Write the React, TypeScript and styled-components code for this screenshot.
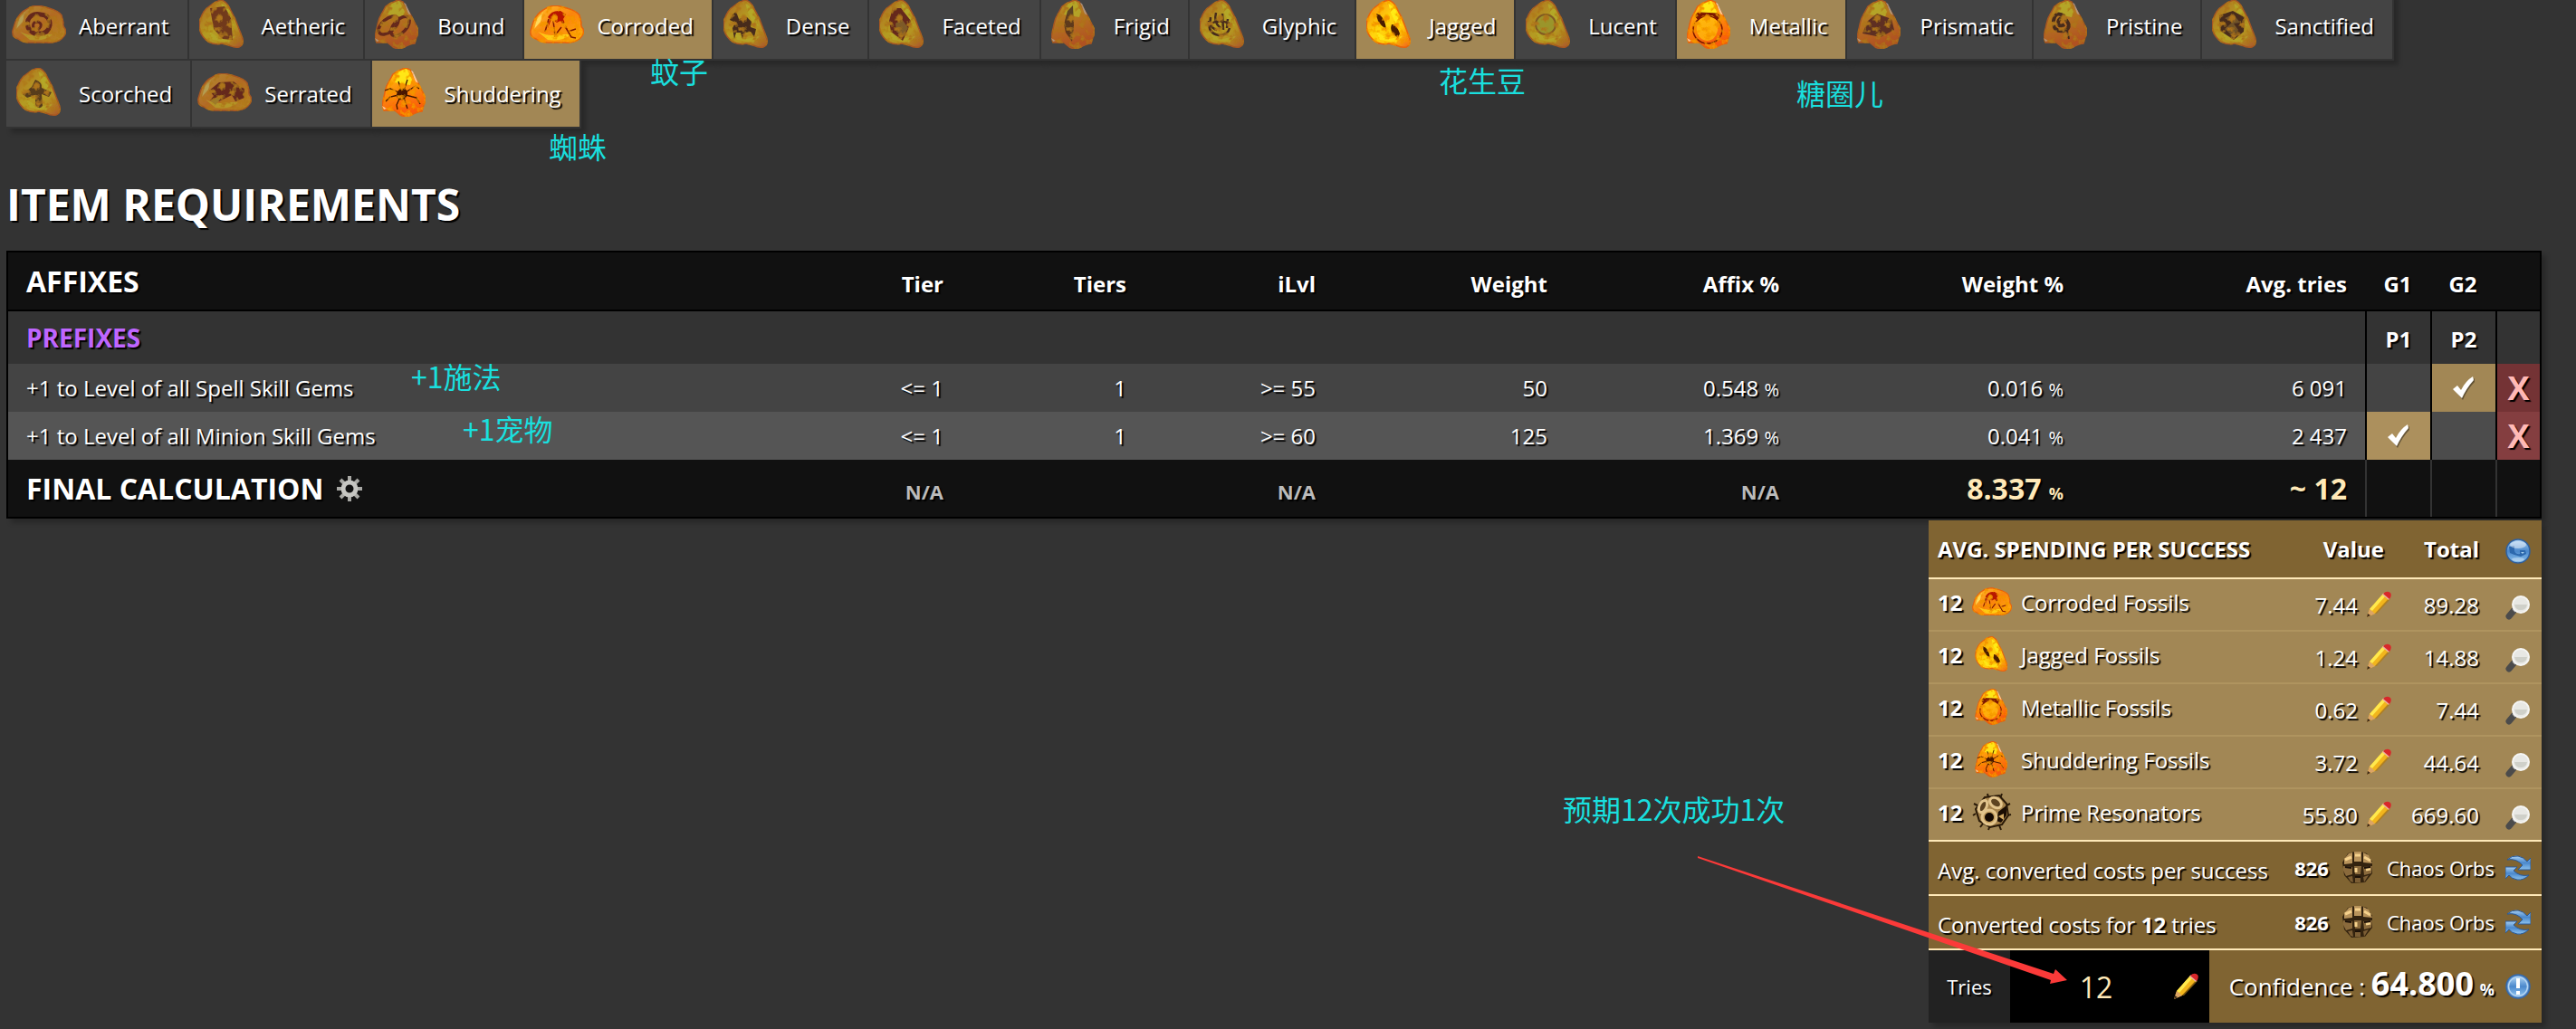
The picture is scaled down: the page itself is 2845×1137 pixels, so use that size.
import React, { useState } from "react";
import styled, { createGlobalStyle, css } from "styled-components";

const color = {
  page: "#333333",
  tile: "#444444",
  rowAlt: "#555555",
  head: "#111111",
  gold: "#a28755",
  goldLight: "#ac905d",
  goldDark: "#806432",
  cream: "#ffe9b8",
  note: "#1adfde",
};

const shadow = "5px 5px 5px rgba(0, 0, 0, 0.22)";

const GlobalStyle = createGlobalStyle`
  *, *::before, *::after { box-sizing: border-box; }
  body {
    margin: 0;
    background: ${color.page};
    color: #fff;
    font: 24px/33px "Open Sans", "Noto Sans CJK SC", sans-serif;
    text-shadow: 2px 2px 1px #000;
    overflow-x: hidden;
  }
  button, input { font: inherit; color: inherit; text-shadow: inherit; }
  strong { font-weight: 700; }
  svg { display: block; flex: none; }
`;

const Page = styled.main`
  position: relative;
  display: flow-root;
  padding: 0 38px 7px 7px;
`;

const FossilList = styled.div`
  display: flex;
  flex-wrap: wrap;
  margin-top: -8px;
`;

const FossilTile = styled.button<{ $on: boolean }>`
  display: flex;
  align-items: center;
  gap: 10px;
  height: 75px;
  padding: 0 20px 0 6px;
  border: 0 solid ${color.page};
  border-width: 0 2px 2px 0;
  background: ${(p) => (p.$on ? color.gold : color.tile)};
  box-shadow: ${shadow};
  cursor: pointer;
  svg { opacity: ${(p) => (p.$on ? 1 : 0.6)}; }
`;

const Heading = styled.h1`
  margin: 51px 0 19px;
  font-size: 48px;
  line-height: 65px;
  font-weight: 700;
`;

const AffixTable = styled.table`
  width: 100%;
  table-layout: fixed;
  border-collapse: separate;
  border-spacing: 0;
  border: 2px solid #000;
  box-shadow: ${shadow};
`;

const Col = styled.col<{ $w?: number }>`
  width: ${(p) => (p.$w ? `${p.$w}px` : "auto")};
`;

const cellBase = css`
  padding: 10px 20px;
  text-align: right;
  vertical-align: baseline;
  white-space: nowrap;
  &:first-child { text-align: left; }
`;

const Cell = styled.td`${cellBase}`;
const HeadCell = styled.th`
  ${cellBase}
  font-weight: 700;
`;

const SlotHead = styled(HeadCell)`
  padding: 10px 0;
  text-align: center;
`;

const SlotCell = styled.td<{ $kind?: "on" | "shade" | "remove" }>`
  padding: 0;
  border-left: 2px solid #000;
  background: ${(p) =>
    p.$kind === "on" ? color.gold
    : p.$kind === "remove" ? "#743335"
    : p.$kind === "shade" ? "rgba(0, 0, 0, 0.1)"
    : "transparent"};
`;

const HeaderRow = styled.tr`
  background: ${color.head};
  th { border-bottom: 2px solid #000; }
`;

const GroupRow = styled.tr`
  background: ${color.page};
  th + th { border-left: 2px solid #000; }
`;

const AffixRow = styled.tr<{ $alt: boolean }>`
  background: ${(p) => (p.$alt ? color.rowAlt : color.tile)};
  ${(p) =>
    p.$alt &&
    css`
      ${SlotCell}:last-child { background: #843e40; }
      ${SlotCell}:has(input:checked) { background: ${color.goldLight}; }
    `}
`;

const FinalRow = styled.tr`
  background: ${color.head};
  td:nth-last-child(-n + 3) { border-left: 2px solid ${color.page}; }
`;

const Title = styled.span<{ $small?: boolean }>`
  font-size: ${(p) => (p.$small ? 28 : 32)}px;
  line-height: ${(p) => (p.$small ? 38 : 43)}px;
  color: ${(p) => (p.$small ? "#bf66ff" : "#fff")};
`;

const FinalTitle = styled.span`
  display: flex;
  align-items: center;
  gap: 14px;
`;

const Small = styled.span`
  font-size: 20px;
  line-height: 20px;
`;

const Muted = styled.span`
  font-size: 22px;
  line-height: 22px;
  font-weight: 700;
  color: #bbb;
`;

const Result = styled.strong`
  font-size: 32px;
  line-height: 43px;
  color: ${color.cream};
  ${Small} { font-size: 18px; }
`;

const CheckLabel = styled.label`
  display: flex;
  align-items: center;
  justify-content: center;
  height: 53px;
  cursor: pointer;
  input { position: absolute; opacity: 0; margin: 0; }
`;

const RemoveButton = styled.button`
  display: block;
  width: 100%;
  height: 53px;
  padding: 0;
  border: 0;
  background: none;
  color: #ffb9b6;
  font-size: 36px;
  font-weight: 700;
  cursor: pointer;
`;

const IconButton = styled.button`
  display: inline-block;
  padding: 0;
  border: 0;
  background: none;
  vertical-align: middle;
  cursor: pointer;
`;

const Panel = styled.section`
  width: 677px;
  margin: 2px 0 0 auto;
  background: ${color.goldDark};
  box-shadow: ${shadow};
`;

const SpendTable = styled.table`
  width: 100%;
  table-layout: fixed;
  border-collapse: separate;
  border-spacing: 0;
  th, td {
    padding: 0;
    text-align: right;
    white-space: nowrap;
    border-bottom: 2px solid #af945f;
  }
  th:first-child, td:first-child {
    padding-left: 10px;
    text-align: left;
  }
  th:last-child, td:last-child { padding-right: 12px; }
  th:nth-child(2) { padding-right: 8px; }
  th { height: 65px; }
  td {
    height: 58px;
    background: ${color.gold};
  }
  th, tr:last-child td { border-bottom-color: ${color.cream}; }
`;

const ItemName = styled.div`
  display: flex;
  align-items: center;
  height: 50px;
  margin-bottom: 6px;
  strong { width: 28px; }
  svg { margin: 0 10px; }
`;

const ValueWithEdit = styled.div`
  display: flex;
  align-items: center;
  justify-content: flex-end;
  gap: 9px;
`;

const CostRow = styled.div`
  display: flex;
  align-items: center;
  height: 60px;
  padding: 0 12px 0 10px;
  border-bottom: 2px solid ${color.cream};
  > span:first-child { margin: 4px auto 0 0; }
`;

const CostAmount = styled.span`
  display: flex;
  align-items: center;
  gap: 12px;
  margin-right: 12px;
  font-size: 22px;
`;

const TriesRow = styled.div`
  display: flex;
  align-items: stretch;
  height: 80px;
`;

const TriesLabel = styled.label`
  display: flex;
  align-items: center;
  justify-content: center;
  width: 90px;
  background: #222;
  font-size: 22px;
`;

const TriesBox = styled.div`
  display: flex;
  align-items: center;
  width: 220px;
  padding: 0 12px 0 10px;
  background: #000;
  input {
    flex: 1;
    min-width: 0;
    height: 100%;
    padding: 0;
    border: 0;
    outline: 0;
    background: none;
    color: ${color.cream};
    font-size: 32px;
    text-align: center;
    text-shadow: none;
  }
`;

const Confidence = styled.div`
  display: flex;
  align-items: center;
  justify-content: flex-end;
  flex: 1;
  gap: 12px;
  padding-right: 12px;
  p { margin: 0; font-size: 26px; line-height: 49px; white-space: nowrap; }
  strong { font-size: 36px; }
  small { font-size: 18px; font-weight: 700; }
`;

const Note = styled.span<{ $x: number; $y: number }>`
  position: absolute;
  left: ${(p) => p.$x}px;
  top: ${(p) => p.$y}px;
  color: ${color.note};
  font: 32px/40px "Noto Sans CJK SC", sans-serif;
  text-shadow: none;
  white-space: nowrap;
  pointer-events: none;
`;

const ArrowDrawing = styled.svg`
  position: absolute;
  left: 1875px;
  top: 946px;
  pointer-events: none;
`;

const SharedDefs = styled.svg`
  position: absolute;
  width: 0;
  height: 0;
`;

/* ---------- drawings ---------- */

type Shape = "round" | "lean" | "tall";

const outlines: Record<Shape, string> = {
  round:
    "M30 7 L41 10 Q52 13 55 18 L57 26 Q56 30 59 33 Q61 39 55 44 Q48 49 39 48 L20 48 Q12 48 7 44 Q0 42 1 35 L4 25 Q9 15 15 12 Q22 7 30 7Z",
  lean:
    "M30 1 Q36 4 38 9 Q45 21 49 33 L53 44 Q54 51 49 53 Q44 54 38 51 L30 49 Q22 51 15 47 Q8 42 6 35 Q4 27 7 20 Q10 12 16 8 Q23 2 30 1Z",
  tall:
    "M31 1 L36 3 L40 10 L45 18 L52 32 Q54 37 51 42 L49 49 Q42 50 38 53 Q30 56 25 53 L19 48 L7 48 L5 42 L7 33 Q8 27 10 21 L17 8 Q24 3 31 1Z",
};

const D = "#4a1c04";
const R = "#7c1602";

const marks: Record<string, React.ReactNode> = {
  Aberrant: (
    <g fill="none" stroke={R} strokeWidth="5" strokeLinecap="round">
      <path d="M25 38 Q15 33 18 23 Q22 15 32 17 Q43 18 42 29 Q40 39 29 38" />
      <path d="M24 32 Q22 25 29 25 Q35 28 30 33" strokeWidth="3" />
    </g>
  ),
  Aetheric: <path d="M17 10 L33 8 L40 21 L42 45 L31 44 L21 33Z" fill={R} opacity=".85" />,
  Bound: (
    <g fill="none" stroke={R} strokeWidth="3.5">
      <ellipse cx="20" cy="29" rx="13" ry="7" transform="rotate(-40 20 29)" />
      <ellipse cx="33" cy="30" rx="13" ry="7" transform="rotate(-48 33 30)" />
    </g>
  ),
  Corroded: (
    <g>
      <path d="M20 20 Q24 12 34 13 L40 17 L37 22 L42 34 L34 24 L30 26 L24 22 L20 32 L22 22Z" fill="#b81500" />
      <path d="M21 22 L17 36 M26 24 L28 40 L35 31 M36 25 L46 42 L51 43 M42 36 L51 33" fill="none" stroke={R} strokeWidth="1.5" />
    </g>
  ),
  Dense: (
    <path d="M12 23 L15 17 L19 14 L22 22 L31 20 L36 25 L35 31 L41 33 L39 42 L35 36 L29 37 L26 44 L24 37 L19 37 L17 44 L15 32 L18 26Z" fill={D} />
  ),
  Faceted: (
    <g>
      <path d="M20 10 L29 10 L40 24 L37 33 L31 46 L18 36 L16 24Z" fill={R} />
      <path d="M23 27 L30 22 L37 32 L31 42 L24 36Z" fill="#a46a16" />
    </g>
  ),
  Frigid: <path d="M29 7 L30 30 L28 47 L21 37 L19 28 L23 13Z" fill={D} opacity=".8" />,
  Glyphic: (
    <g fill="none" stroke={D} strokeWidth="2.5">
      <path d="M15 24 Q14 38 26 40 Q36 40 38 32 M17 20 Q15 32 24 34 M23 15 Q20 26 28 32 M30 16 L31 34 M36 22 L35 32 M17 27 Q27 22 38 27" />
    </g>
  ),
  Jagged: (
    <g fill={D}>
      <path d="M16 16 Q25 18 27 33 Q17 28 16 16Z" />
      <path d="M33 28 Q38 27 42 38 L40 43 L34 38 Q31 33 33 28Z" />
    </g>
  ),
  Lucent: <circle cx="27" cy="28" r="11" fill="#d4cc1c" stroke="#ac6a0c" strokeWidth="2" />,
  Metallic: (
    <g fill="none" stroke={R}>
      <path d="M18 23 L15 20 Q14 15 20 15 L38 16 Q42 17 41 21 L38 23 L34 18 L22 18Z" fill={R} strokeWidth="1" />
      <ellipse cx="28" cy="34" rx="16" ry="15" strokeWidth="1.5" />
      <path d="M18 24 Q27 14 38 24 Q42 36 34 44 Q26 49 19 42 Q13 34 18 24Z" fill="#ffc40a" stroke="none" opacity=".7" />
    </g>
  ),
  Prismatic: <path d="M27 16 L43 22 L46 34 L31 42 L11 38 L17 24Z" fill="#70200a" />,
  Pristine: (
    <g fill="none" stroke={D} strokeWidth="4">
      <path d="M28 19 Q18 12 16 24 Q15 37 28 35 Q37 31 29 22 Q22 19 21 26 Q22 32 28 28" />
      <path d="M31 34 L33 44" strokeWidth="2" />
    </g>
  ),
  Sanctified: (
    <g>
      <path d="M13 18 L28 13 L41 20 L40 36 L29 45 L14 35Z" fill={D} />
      <path d="M19 21 L29 17 L36 26 L29 27 L34 34 L28 41 L19 33 L27 26Z" fill="#8d5b14" />
    </g>
  ),
  Scorched: (
    <path d="M26 14 Q34 17 33 23 L44 28 L41 33 L33 30 L34 43 Q30 48 26 42 L26 31 L17 34 L12 30 L22 22Z" fill={D} opacity=".85" />
  ),
  Serrated: (
    <g>
      <path d="M13 26 L24 17 L40 16 L46 21 L52 24 L52 34 L42 38 L38 31 L24 38 L14 37 L18 32Z" fill={R} />
      <path d="M24 32 L29 31 L20 42 L14 37Z" fill="#d89e18" />
    </g>
  ),
  Shuddering: (
    <g stroke="#3d1400" strokeWidth="1.3" fill="none">
      <path d="M27 28 L23 16 M29 26 L33 14 M31 28 L42 21 L46 24 M31 31 L43 34 L47 41 M23 28 L14 24 L8 26 M23 31 L14 33 L9 38 M25 33 L21 42 L22 47 M29 34 L33 46" />
      <ellipse cx="27" cy="30" rx="5" ry="6" fill="#4a1700" transform="rotate(35 27 30)" />
    </g>
  ),
};

function FossilIcon({ name, shape, width = 64, height = 60 }: { name: string; shape: Shape; width?: number; height?: number }) {
  return (
    <svg width={width} height={height} viewBox={width === 64 ? "0 0 64 60" : "0 0 60 56"} aria-hidden="true">
      <g filter="url(#amber)">
        <path d={outlines[shape]} fill={`url(#stone-${shape})`} stroke="#e8620a" strokeWidth="1.5" />
        {shape === "round" && (
          <>
            <path d="M9 36 Q22 42 32 39 L45 39 Q38 47 20 45Z" fill="#ffe41a" opacity=".7" />
            <path d="M8 22 L15 14 L12 25 L5 33Z" fill="#ffe96a" opacity=".8" />
          </>
        )}
        {shape === "lean" && (
          <>
            <path d="M29 4 L37 11 L44 30 L37 26 L32 15Z" fill="#fff01a" opacity=".8" />
            <path d="M16 36 L30 44 L45 41 L38 48 L20 45Z" fill="#fff01a" opacity=".7" />
          </>
        )}
        {shape === "tall" && (
          <>
            <path d="M21 6 L32 2 L38 14 L36 20 L19 17Z" fill="#fff01a" opacity=".85" />
            <path d="M7 47 L5 43 L10 46Z M37 4 L39 5 L45 18 L42 16Z" fill="#ffe3c4" opacity=".8" />
          </>
        )}
        {marks[name]}
      </g>
    </svg>
  );
}

const ResonatorIcon = () => (
  <svg width="44" height="42" viewBox="0 0 44 42" aria-hidden="true">
    <g stroke="#2a1a08" strokeWidth="2">
      <path d="M18 5 L17 1 M31 6 L33 1 M6 14 L2 12 M38 14 L42 12 M4 23 L1 25 M39 25 L43 24 M12 34 L9 38 M20 36 L18 41 M30 36 L32 41" />
      <path d="M14 5 L30 3 L38 12 L40 25 L33 35 L20 38 L8 31 L4 18Z" fill="#a5824a" />
    </g>
    <path d="M29 21 L38 14 L38 25 L32 33 L27 31Z" fill="#1a0d03" />
    <g fill="#5d4320" stroke="#e2c48c" strokeWidth="3">
      <ellipse cx="26" cy="11" rx="7" ry="5" transform="rotate(35 26 11)" />
      <ellipse cx="12" cy="15" rx="4" ry="7" transform="rotate(25 12 15)" />
      <ellipse cx="19" cy="27" rx="8" ry="8" fill="#c29c5c" />
    </g>
    <circle cx="19" cy="27" r="5" fill="#120802" />
    <path d="M29 26 L35 23 L35 30 Z" fill="#d0a862" />
  </svg>
);

const ChaosIcon = () => (
  <svg width="40" height="38" viewBox="0 0 40 38" aria-hidden="true">
    <path d="M9 3 Q20 -1 30 3 L36 12 L36 25 L28 35 L13 36 L5 27 L3 13Z" fill="#33230f" />
    <g fill="#b8935b">
      <path d="M10 3 L14 2 L14 14 L5 15 L5 9Z M16 1 L24 1 L24 12 L16 12Z M26 2 L32 5 L36 14 L26 13Z" />
      <path d="M4 17 L14 18 L14 26 L7 28 L4 22Z M26 18 L36 17 L35 25 L27 27Z M16 17 L24 17 L23 26 L17 26Z" fill="#8a6a3c" />
      <path d="M9 29 L14 28 L15 35 L12 34Z M17 28 L23 28 L23 35 L17 35Z M26 29 L32 27 L27 35Z" fill="#7b5d34" />
    </g>
    <path d="M6 10 L13 7 M27 7 L34 11 M17 5 L23 5 M18 19 L18 24 M29 21 L34 20" stroke="#f6d28c" strokeWidth="3" />
    <path d="M6 18 L13 19 M27 19 L34 18 M17 29 L23 29" stroke="#1c1108" strokeWidth="2" />
  </svg>
);

const PencilIcon = () => (
  <svg width="28" height="30" viewBox="0 0 28 30" aria-hidden="true">
    <path d="M1 29 L4 20 L19 3 L26 8 L10 25Z" fill="#f2b51c" />
    <path d="M4 20 L19 3 L22 5 L7 22Z" fill="#ffe94d" />
    <path d="M10 25 L25 8 L27 9 L12 25Z" fill="#b07a12" opacity=".7" />
    <path d="M1 29 L4 20 L10 25Z" fill="#dba466" />
    <path d="M1 29 L2 25 L5 27Z" fill="#3b2a18" />
    <path d="M18 4 L20 2 L27 7 L25 10Z" fill="#e9b2a4" />
    <path d="M19 3 Q23 -1 27 2 Q29 5 26 9Z" fill="#d8282a" />
  </svg>
);

const MagnifierIcon = () => (
  <svg width="28" height="28" viewBox="0 0 28 28" aria-hidden="true">
    <path d="M9 18 L4 24" stroke="#4b4b4b" strokeWidth="7" strokeLinecap="round" />
    <path d="M12 15 L9 18" stroke="#a5a5a5" strokeWidth="4" />
    <circle cx="17" cy="11" r="9" fill="#e8e8e4" stroke="#f6f6f4" strokeWidth="2" />
    <path d="M10 11 L24 11 Q23 17 17 17 Q11 17 10 11Z" fill="#cfd0c9" />
  </svg>
);

const GlobeIcon = () => (
  <svg width="28" height="28" viewBox="0 0 28 28" aria-hidden="true">
    <circle cx="14" cy="14" r="13" fill="url(#blue)" stroke="#2f609f" strokeWidth="1.5" />
    <path d="M4 9 L10 8 L10 14 Q12 18 16 17 L16 13 L22 13 L23 17 L17 20 L10 18 L5 16Z" fill="#2c68ad" />
    <path d="M17 15 L21 15 L19 17Z" fill="#9fcbee" />
    <ellipse cx="14" cy="7" rx="9" ry="4" fill="#fff" opacity=".45" />
    <ellipse cx="14" cy="23" rx="7" ry="2" fill="#fff" opacity=".35" />
  </svg>
);

const RefreshIcon = () => (
  <svg width="28" height="28" viewBox="0 0 28 28" aria-hidden="true">
    <g fill="url(#blue)" stroke="#27599b" strokeWidth="1">
      <path d="M2 5 Q7 0 14 1 Q20 2 24 7 L28 3 L28 16 L14 16 L19 11 Q12 3 2 5Z" />
      <path d="M26 22 Q20 28 13 27 Q7 26 4 22 L0 26 L0 13 L13 13 L9 17 Q16 24 26 22Z" />
    </g>
  </svg>
);

const InfoIcon = () => (
  <svg width="28" height="28" viewBox="0 0 28 28" aria-hidden="true">
    <circle cx="14" cy="14" r="13" fill="#5d93cf" stroke="#3569ab" strokeWidth="1.5" />
    <circle cx="14" cy="14" r="10.5" fill="url(#blue)" stroke="#b5d5f2" strokeWidth="1.5" />
    <path d="M12 5 L16 5 L16 16 L12 16Z M12 19 L16 19 L16 23 L12 23Z" fill="#fff" />
  </svg>
);

const GearIcon = () => (
  <svg width="28" height="28" viewBox="0 0 28 28" aria-hidden="true">
    <g stroke="#a9a9a5" strokeWidth="4">
      <path d="M14 0 V28 M0 14 H28 M4 4 L24 24 M24 4 L4 24" />
    </g>
    <circle cx="14" cy="14" r="7" fill={color.head} stroke="#c6c6c2" strokeWidth="5" />
  </svg>
);

const CheckIcon = () => (
  <svg width="28" height="30" viewBox="0 0 28 30" aria-hidden="true">
    <path d="M4 17 L8 14 L12 20 Q17 9 26 4 L26 8 Q18 16 13 28Z" fill="#000" opacity=".4" />
    <path d="M2 16 L7 12 L11 17 Q16 7 24 2 L25 6 Q17 15 12 26Z" fill="#fff" />
  </svg>
);

/* ---------- data ---------- */

const fossils: [string, Shape][] = [
  ["Aberrant", "round"], ["Aetheric", "lean"], ["Bound", "tall"], ["Corroded", "round"],
  ["Dense", "lean"], ["Faceted", "lean"], ["Frigid", "tall"], ["Glyphic", "lean"],
  ["Jagged", "lean"], ["Lucent", "lean"], ["Metallic", "tall"], ["Prismatic", "tall"],
  ["Pristine", "tall"], ["Sanctified", "lean"], ["Scorched", "lean"], ["Serrated", "round"],
  ["Shuddering", "tall"],
];

const affixes = [
  { name: "+1 to Level of all Spell Skill Gems", level: ">= 55", weight: "50", affix: "0.548", share: "0.016", tries: "6 091", slot: 1 },
  { name: "+1 to Level of all Minion Skill Gems", level: ">= 60", weight: "125", affix: "1.369", share: "0.041", tries: "2 437", slot: 0 },
];

const spending: { name: string; fossil?: string; shape?: Shape; value: string; total: string }[] = [
  { name: "Corroded Fossils", fossil: "Corroded", shape: "round", value: "7.44", total: "89.28" },
  { name: "Jagged Fossils", fossil: "Jagged", shape: "lean", value: "1.24", total: "14.88" },
  { name: "Metallic Fossils", fossil: "Metallic", shape: "tall", value: "0.62", total: "7.44" },
  { name: "Shuddering Fossils", fossil: "Shuddering", shape: "tall", value: "3.72", total: "44.64" },
  { name: "Prime Resonators", value: "55.80", total: "669.60" },
];

const notes: [string, number, number][] = [
  ["蚊子", 718, 58],
  ["蜘蛛", 606, 141],
  ["花生豆", 1589, 68],
  ["糖圈儿", 1984, 82],
  ["+1施法", 454, 395],
  ["+1宠物", 511, 453],
  ["预期12次成功1次", 1726, 873],
];

const affixHeads: [string, number][] = [
  ["Tier", 202], ["Tiers", 202], ["iLvl", 209], ["Weight", 256],
  ["Affix %", 256], ["Weight %", 314], ["Avg. tries", 313],
];

const slotWidths = [72, 72, 49];

function ChaosCost() {
  return (
    <>
      <CostAmount>
        <strong>826</strong>
        <ChaosIcon />
        <span>Chaos Orbs</span>
      </CostAmount>
      <IconButton aria-label="Convert currency"><RefreshIcon /></IconButton>
    </>
  );
}

export default function App() {
  const [selected, setSelected] = useState(["Corroded", "Jagged", "Metallic", "Shuddering"]);
  const toggle = (name: string) =>
    setSelected((now) => (now.includes(name) ? now.filter((n) => n !== name) : [...now, name]));

  return (
    <Page>
      <GlobalStyle />
      <SharedDefs aria-hidden="true">
        <defs>
          <linearGradient id="stone-round" x1="0" y1="0" x2="1" y2="1">
            <stop offset="0" stopColor="#ffc52e" /><stop offset=".5" stopColor="#fb8410" /><stop offset="1" stopColor="#ffb20a" />
          </linearGradient>
          <linearGradient id="stone-lean" x1="0" y1="0" x2="1" y2="1">
            <stop offset="0" stopColor="#f57d10" /><stop offset=".45" stopColor="#ffd60a" /><stop offset=".7" stopColor="#ffc80a" /><stop offset="1" stopColor="#f06018" />
          </linearGradient>
          <linearGradient id="stone-tall" x1="0" y1="0" x2=".3" y2="1">
            <stop offset="0" stopColor="#ffd81a" /><stop offset=".4" stopColor="#ff9c0a" /><stop offset="1" stopColor="#f95a08" />
          </linearGradient>
          <linearGradient id="blue" x1="0" y1="0" x2="0" y2="1">
            <stop offset="0" stopColor="#a9d0f2" /><stop offset=".5" stopColor="#4a88cc" /><stop offset="1" stopColor="#8cc2ee" />
          </linearGradient>
          <filter id="amber" x="0" y="0" width="1" height="1">
            <feTurbulence type="fractalNoise" baseFrequency=".16" numOctaves="3" seed="4" result="noise" />
            <feColorMatrix in="noise" values="0 0 0 0 .9  0 0 0 0 .3  0 0 0 0 0  4 0 0 0 -2" result="veins" />
            <feComposite in="veins" in2="SourceAlpha" operator="in" result="inside" />
            <feMerge><feMergeNode in="SourceGraphic" /><feMergeNode in="inside" /></feMerge>
          </filter>
        </defs>
      </SharedDefs>

      <FossilList>
        {fossils.map(([name, shape]) => (
          <FossilTile key={name} $on={selected.includes(name)} aria-pressed={selected.includes(name)} onClick={() => toggle(name)}>
            <FossilIcon name={name} shape={shape} />
            <span>{name}</span>
          </FossilTile>
        ))}
      </FossilList>

      <Heading>ITEM REQUIREMENTS</Heading>

      <AffixTable>
        <colgroup>
          <Col />
          {affixHeads.map(([t, w]) => <Col key={t} $w={w} />)}
          {slotWidths.map((w, i) => <Col key={i} $w={w} />)}
        </colgroup>
        <thead>
          <HeaderRow>
            <HeadCell><Title>AFFIXES</Title></HeadCell>
            {affixHeads.map(([t]) => <HeadCell key={t}>{t}</HeadCell>)}
            <SlotHead>G1</SlotHead>
            <SlotHead>G2</SlotHead>
            <SlotHead />
          </HeaderRow>
        </thead>
        <tbody>
          <GroupRow>
            <HeadCell colSpan={8}><Title $small>PREFIXES</Title></HeadCell>
            <SlotHead>P1</SlotHead>
            <SlotHead>P2</SlotHead>
            <SlotHead />
          </GroupRow>
          {affixes.map((a, row) => (
            <AffixRow key={a.name} $alt={row === 1}>
              <Cell>{a.name}</Cell>
              <Cell>&lt;= 1</Cell>
              <Cell>1</Cell>
              <Cell>{a.level}</Cell>
              <Cell>{a.weight}</Cell>
              <Cell>{a.affix} <Small>%</Small></Cell>
              <Cell>{a.share} <Small>%</Small></Cell>
              <Cell>{a.tries}</Cell>
              {[0, 1].map((slot) => (
                <SlotCell key={slot} $kind={a.slot === slot ? "on" : row === 1 ? "shade" : undefined}>
                  <CheckLabel>
                    <input type="checkbox" checked={a.slot === slot} readOnly aria-label={`${a.name}, P${slot + 1}`} />
                    {a.slot === slot && <CheckIcon />}
                  </CheckLabel>
                </SlotCell>
              ))}
              <SlotCell $kind="remove"><RemoveButton>X</RemoveButton></SlotCell>
            </AffixRow>
          ))}
          <FinalRow>
            <Cell>
              <FinalTitle>
                <Title as="strong">FINAL CALCULATION</Title>
                <IconButton aria-label="Calculation settings"><GearIcon /></IconButton>
              </FinalTitle>
            </Cell>
            <Cell><Muted>N/A</Muted></Cell>
            <Cell />
            <Cell><Muted>N/A</Muted></Cell>
            <Cell />
            <Cell><Muted>N/A</Muted></Cell>
            <Cell><Result>8.337 <Small>%</Small></Result></Cell>
            <Cell><Result>~ 12</Result></Cell>
            <td /><td /><td />
          </FinalRow>
        </tbody>
      </AffixTable>

      <Panel>
        <SpendTable>
          <colgroup>
            <Col />
            <Col $w={120} />
            <Col $w={97} />
            <Col $w={69} />
          </colgroup>
          <thead>
            <tr>
              <th>AVG. SPENDING PER SUCCESS</th>
              <th>Value</th>
              <th>Total</th>
              <th><IconButton aria-label="Load prices"><GlobeIcon /></IconButton></th>
            </tr>
          </thead>
          <tbody>
            {spending.map((s) => (
              <tr key={s.name}>
                <td>
                  <ItemName>
                    <strong>12</strong>
                    {s.fossil && s.shape ? <FossilIcon name={s.fossil} shape={s.shape} width={44} height={42} /> : <ResonatorIcon />}
                    <span>{s.name}</span>
                  </ItemName>
                </td>
                <td>
                  <ValueWithEdit>
                    <span>{s.value}</span>
                    <IconButton aria-label={`Edit value of ${s.name}`}><PencilIcon /></IconButton>
                  </ValueWithEdit>
                </td>
                <td>{s.total}</td>
                <td><IconButton aria-label={`Search ${s.name}`}><MagnifierIcon /></IconButton></td>
              </tr>
            ))}
          </tbody>
        </SpendTable>
        <CostRow>
          <span>Avg. converted costs per success</span>
          <ChaosCost />
        </CostRow>
        <CostRow>
          <span>Converted costs for <strong>12</strong> tries</span>
          <ChaosCost />
        </CostRow>
        <TriesRow>
          <TriesLabel htmlFor="tries">Tries</TriesLabel>
          <TriesBox>
            <input id="tries" defaultValue="12" />
            <PencilIcon />
          </TriesBox>
          <Confidence>
            <p>Confidence : <strong>64.800</strong> <small>%</small></p>
            <IconButton aria-label="About confidence"><InfoIcon /></IconButton>
          </Confidence>
        </TriesRow>
      </Panel>

      {notes.map(([text, x, y]) => <Note key={text} $x={x} $y={y}>{text}</Note>)}
      <ArrowDrawing width="412" height="144" viewBox="0 0 412 144" aria-hidden="true">
        <path d="M0 0 L393 130 L395 125 L408 137 L389 141 L390 137 L0 2 Z" fill="#fb3a39" />
      </ArrowDrawing>
    </Page>
  );
}
